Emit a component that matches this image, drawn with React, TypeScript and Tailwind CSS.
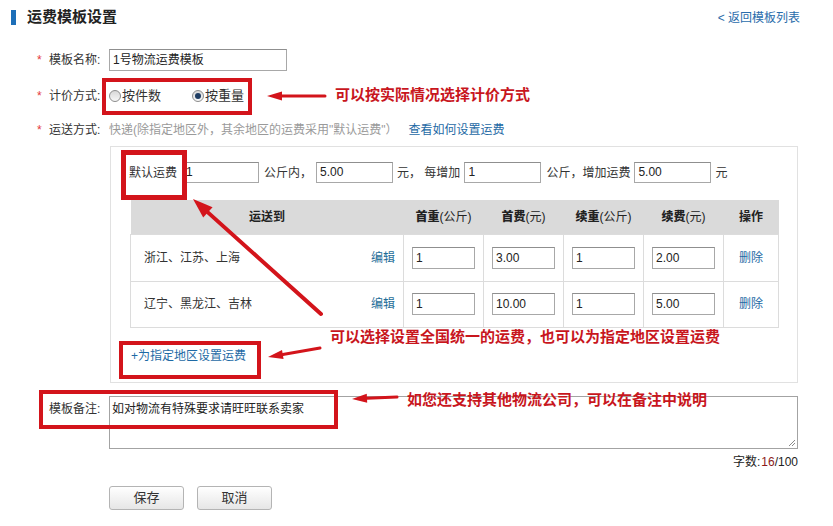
import React from 'react';

const RED = '#d3141b';

function Radio({ checked, label }: { checked?: boolean; label: string }) {
  return (
    <span className="flex items-center">
      <span className="flex h-[12px] w-[12px] items-center justify-center rounded-full border border-[#8c8c8c] bg-gradient-to-b from-[#d8d8d8] to-[#f7f7f7]">
        {checked && <span className="h-[6px] w-[6px] rounded-full bg-[#1f3d63]" />}
      </span>
      <span className="ml-[1px]">{label}</span>
    </span>
  );
}

function Arrow({ x1, y1, x2, y2, w, head, half }: { x1: number; y1: number; x2: number; y2: number; w: number; head: number; half: number }) {
  const len = Math.hypot(x2 - x1, y2 - y1);
  const ux = (x2 - x1) / len;
  const uy = (y2 - y1) / len;
  const bx = x2 - ux * head;
  const by = y2 - uy * head;
  const px = -uy;
  const py = ux;
  return (
    <g>
      <line x1={x1} y1={y1} x2={bx} y2={by} stroke={RED} strokeWidth={w} strokeLinecap="round" />
      <polygon
        points={`${x2},${y2} ${bx + px * half},${by + py * half} ${bx - px * half},${by - py * half}`}
        fill={RED}
      />
    </g>
  );
}

function TextInput({ value, className }: { value: string; className: string }) {
  return (
    <div className={`h-[21px] border border-[#a8a8a8] border-t-[#8f8f8f] bg-white px-[3px] leading-[19px] text-[#222] ${className}`}>
      {value}
    </div>
  );
}

const regions = [
  { name: '浙江、江苏、上海', first: '1', firstFee: '3.00', next: '1', nextFee: '2.00', h: 'h-[47px]' },
  { name: '辽宁、黑龙江、吉林', first: '1', firstFee: '10.00', next: '1', nextFee: '5.00', h: 'h-[46px]' },
];

export default function App() {
  return (
    <div className="relative h-[526px] w-[833px] overflow-hidden bg-white font-['Liberation_Sans','Noto_Sans_CJK_SC',sans-serif] text-[12px] leading-[14px] text-[#333]">
      {/* header */}
      <div className="flex items-start justify-between pl-[11px] pr-[33px] pt-[9px]">
        <div className="flex items-center">
          <span className="h-[15px] w-[5px] bg-[#1d6fb8]" />
          <span className="ml-[11px] text-[15px] font-bold leading-[16px] text-[#222]">运费模板设置</span>
        </div>
        <a className="mt-[2px] text-[#2a6cab]">&lt; 返回模板列表</a>
      </div>

      <div className="pl-[37px]">
        {/* 模板名称 */}
        <div className="mt-[24px] flex h-[22px] items-center">
          <span className="w-[12px] self-start pt-[4px] text-[#e4393c]">*</span>
          <span className="w-[60px]">模板名称:</span>
          <TextInput value="1号物流运费模板" className="h-[22px] w-[178px] leading-[20px]" />
        </div>

        {/* 计价方式 */}
        <div className="mt-[14px] flex h-[22px] items-center">
          <span className="w-[12px] self-start pt-[4px] text-[#e4393c]">*</span>
          <span className="w-[60px]">计价方式:</span>
          <div className="flex items-center gap-[31px] text-[13px]">
            <Radio label="按件数" />
            <Radio label="按重量" checked />
          </div>
        </div>

        {/* 运送方式 */}
        <div className="mt-[12px] flex h-[22px] items-center">
          <span className="w-[12px] self-start pt-[4px] text-[#e4393c]">*</span>
          <span className="w-[60px]">运送方式:</span>
          <span className="text-[#9a9a9a]">快递(除指定地区外，其余地区的运费采用"默认运费"）</span>
          <a className="ml-[11px] text-[#1e6aa5]">查看如何设置运费</a>
        </div>
      </div>

      {/* 运费设置框 */}
      <div className="ml-[110px] mt-[5px] h-[237px] w-[688px] border border-[#e1e1e1]">
        <div className="mt-[15px] flex items-center pl-[18px]">
          <span>默认运费</span>
          <TextInput value="1" className="ml-[5px] w-[77px]" />
          <span className="ml-[5px]">公斤内，</span>
          <TextInput value="5.00" className="ml-[4px] w-[77px]" />
          <span className="ml-[4px]">元，&nbsp;每增加</span>
          <TextInput value="1" className="ml-[4px] w-[77px]" />
          <span className="ml-[5px]">公斤，增加运费</span>
          <TextInput value="5.00" className="ml-[4px] w-[77px]" />
          <span className="ml-[4px]">元</span>
        </div>

        <table className="ml-[19px] mt-[17px] w-[648px] table-fixed border-collapse">
          <colgroup>
            <col className="w-[273px]" />
            <col className="w-[80px]" />
            <col className="w-[80px]" />
            <col className="w-[80px]" />
            <col className="w-[80px]" />
            <col className="w-[55px]" />
          </colgroup>
          <thead>
            <tr className="h-[34px] bg-[#dadada] text-[#222]">
              <th className="font-bold">运送到</th>
              <th><b>首重</b><span className="font-normal">(公斤)</span></th>
              <th><b>首费</b><span className="font-normal">(元)</span></th>
              <th><b>续重</b><span className="font-normal">(公斤)</span></th>
              <th><b>续费</b><span className="font-normal">(元)</span></th>
              <th className="font-bold">操作</th>
            </tr>
          </thead>
          <tbody>
            {regions.map((r) => (
              <tr key={r.name} className={r.h}>
                <td className="border border-[#dcdcdc] pl-[13px] pr-[8px]">
                  <div className="flex items-center justify-between">
                    <span>{r.name}</span>
                    <a className="text-[#1f6e98]">编辑</a>
                  </div>
                </td>
                {[r.first, r.firstFee, r.next, r.nextFee].map((v, i) => (
                  <td key={i} className="border border-[#dcdcdc] pl-[8px]">
                    <TextInput value={v} className="h-[22px] w-[63px] leading-[20px]" />
                  </td>
                ))}
                <td className="border border-[#dcdcdc] text-center">
                  <a className="text-[#1e6aa5]">删除</a>
                </td>
              </tr>
            ))}
          </tbody>
        </table>

        <a className="ml-[20px] mt-[20px] block leading-[16px] text-[#1e6aa5]">+为指定地区设置运费</a>
      </div>

      {/* 模板备注 */}
      <div className="mt-[13px] flex pl-[49px]">
        <span className="w-[60px] pt-[6px]">模板备注:</span>
        <div className="relative h-[53px] w-[689px] border border-[#a3a3a3] pl-[2px] pt-[5px] text-[#222]">
          如对物流有特殊要求请旺旺联系卖家
          <svg className="absolute bottom-[1px] right-[1px]" width="9" height="9" viewBox="0 0 9 9">
            <path d="M8 2 L2 8 M8 5 L5 8" stroke="#8a8a8a" strokeWidth="1" />
          </svg>
        </div>
      </div>

      <div className="mt-[6px] flex w-[798px] justify-end text-[#222]">
        字数:<span className="ml-[1px] text-[#8b1a1a]">16</span>/100
      </div>

      <div className="ml-[109px] mt-[17px] flex gap-[13px]">
        <button className="h-[24px] w-[75px] rounded-[3px] border border-[#b4b4b4] bg-gradient-to-b from-white to-[#e6e6e6] text-[13px] text-[#333]">
          保存
        </button>
        <button className="h-[24px] w-[75px] rounded-[3px] border border-[#b4b4b4] bg-gradient-to-b from-white to-[#e6e6e6] text-[13px] text-[#333]">
          取消
        </button>
      </div>

      {/* annotation layer */}
      <div className="pointer-events-none absolute left-[102px] top-[78px] h-[37px] w-[150px] border-[4px] border-[#d3141b]" />
      <div className="pointer-events-none absolute left-[121px] top-[150px] h-[50px] w-[66px] border-[5px] border-[#d3141b]" />
      <div className="pointer-events-none absolute left-[119px] top-[341px] h-[38px] w-[142px] border-[4px] border-[#d3141b]" />
      <div className="pointer-events-none absolute left-[39px] top-[390px] h-[39px] w-[299px] border-[4px] border-[#d3141b]" />

      <svg className="pointer-events-none absolute left-0 top-0" width="833" height="526">
        <Arrow x1={325} y1={96} x2={267} y2={96} w={3} head={15} half={4.5} />
        <Arrow x1={321} y1={314} x2={193} y2={199} w={4} head={20} half={7} />
        <Arrow x1={320} y1={348} x2={268} y2={357} w={3} head={15} half={4.5} />
        <Arrow x1={397} y1={397} x2={352} y2={399} w={3} head={15} half={4.5} />
      </svg>

      <div className="pointer-events-none absolute left-[335px] top-[86px] text-[15px] font-bold leading-[18px] text-[#c8161d]">
        可以按实际情况选择计价方式
      </div>
      <div className="pointer-events-none absolute left-[330px] top-[328px] text-[15px] font-bold leading-[18px] text-[#c8161d]">
        可以选择设置全国统一的运费，也可以为指定地区设置运费
      </div>
      <div className="pointer-events-none absolute left-[407px] top-[391px] text-[15px] font-bold leading-[18px] text-[#c8161d]">
        如您还支持其他物流公司，可以在备注中说明
      </div>
    </div>
  );
}
